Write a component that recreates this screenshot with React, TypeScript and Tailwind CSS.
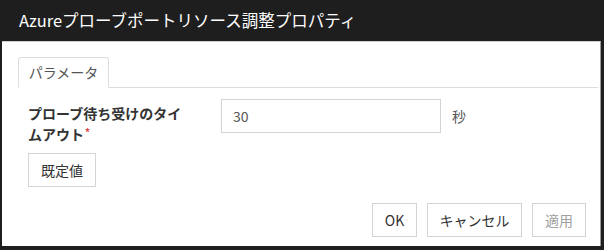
const font = { fontFamily: '"Noto Sans CJK JP", "Noto Sans", sans-serif' };

const Btn = ({ label, w, disabled }: { label: string; w: string; disabled?: boolean }) => (
  <button
    className={`${w} h-[34px] border border-[#d4d4d4] bg-white text-[14px] flex items-center justify-center ${
      disabled ? "text-[#a0a0a0]" : "text-[#333]"
    }`}
  >
    {label}
  </button>
);

const App = () => {
  return (
    <div className="w-[604px] h-[250px] bg-[#1e1e1e] flex flex-col" style={font}>
      <div className="h-[41px] flex items-center pl-[19px] text-white text-[16.5px] shrink-0">
        Azureプローブポートリソース調整プロパティ
      </div>

      <div className="flex-1 ml-[2px] w-[599px] mb-[4px] bg-white border-t border-t-[#cfcfcf] border-r border-r-[#9a9a9a] flex flex-col">
        {/* tab bar */}
        <div className="pt-[15px] pl-[16px] pr-[2px]">
          <div className="flex border-b border-[#dddddd]">
            <div className="h-[31px] w-[91px] -mb-px bg-white border border-[#dddddd] border-b-white rounded-t-[3px] flex items-center justify-center text-[14px] text-[#555]">
              パラメータ
            </div>
          </div>
        </div>

        {/* form */}
        <div className="pl-[26px] mt-[11px]">
          <div className="flex items-start">
            <div className="w-[193px] pt-[4px] text-[14px] leading-[21px] font-bold text-[#333]">
              <div>プローブ待ち受けのタイ</div>
              <div className="flex items-start">
                <span>ムアウト</span>
                <span className="ml-[1px] mt-[3px] leading-none text-[#e04040] text-[10px]">*</span>
              </div>
            </div>
            <div className="w-[220px] h-[34px] border border-[#d4d4d4] flex items-center px-[11px] text-[14px] text-[#555]">
              30
            </div>
            <span className="ml-[11px] mt-[7px] text-[14px] text-[#555]">秒</span>
          </div>

          <button className="mt-[8px] w-[68px] h-[34px] border border-[#d4d4d4] bg-white text-[14px] text-[#333]">
            既定値
          </button>
        </div>

        {/* footer */}
        <div className="mt-[16px] flex justify-end gap-[10px] pr-[14px]">
          <Btn label="OK" w="w-[45px]" />
          <Btn label="キャンセル" w="w-[95px]" />
          <Btn label="適用" w="w-[54px]" disabled />
        </div>
      </div>
    </div>
  );
};

export default App;
